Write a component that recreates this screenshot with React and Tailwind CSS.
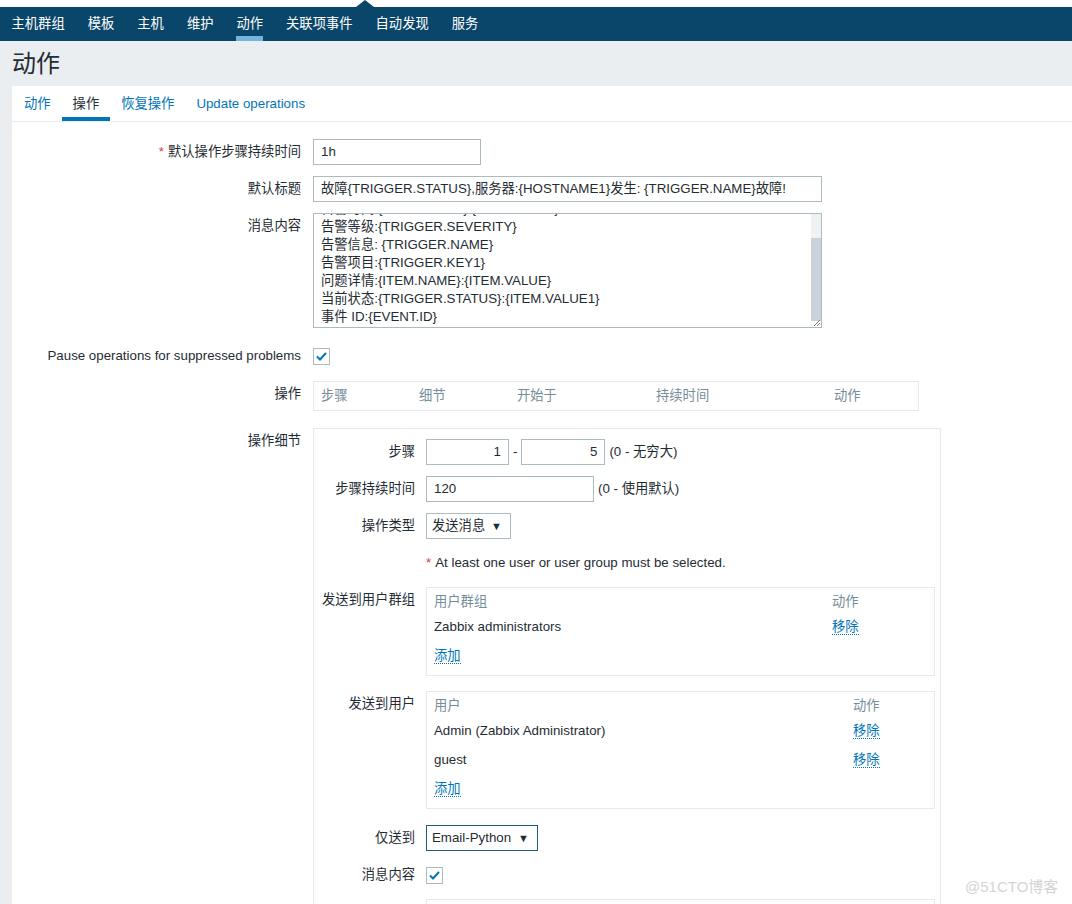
import React from 'react';

const navItems = ['主机群组', '模板', '主机', '维护', '动作', '关联项事件', '自动发现', '服务'];
const tabs = ['动作', '操作', '恢复操作', 'Update operations'];

const messageLines = [
  '告警时间:{EVENT.DATE} {EVENT.TIME}',
  '告警等级:{TRIGGER.SEVERITY}',
  '告警信息: {TRIGGER.NAME}',
  '告警项目:{TRIGGER.KEY1}',
  '问题详情:{ITEM.NAME}:{ITEM.VALUE}',
  '当前状态:{TRIGGER.STATUS}:{ITEM.VALUE1}',
  '事件 ID:{EVENT.ID}',
];

function Check() {
  return (
    <div className="w-[17px] h-[17px] border border-[#acbbc2] bg-white flex items-center justify-center">
      <svg width="11" height="9" viewBox="0 0 11 9">
        <path d="M1 4.5 L4 7.5 L10 1" fill="none" stroke="#0275b8" strokeWidth="2" />
      </svg>
    </div>
  );
}

function Input({ value, className = '' }) {
  return (
    <div className={`h-[26px] border border-[#acbbc2] bg-white px-[7px] flex items-center whitespace-nowrap ${className}`}>
      {value}
    </div>
  );
}

function Select({ value, className = '' }) {
  return (
    <div className={`h-[26px] border bg-white pl-[5px] pr-[8px] flex items-center justify-between ${className}`}>
      <span>{value}</span>
      <span className="text-[11px]">▼</span>
    </div>
  );
}

function Link({ children }) {
  return <span className="text-[#0275b8] border-b border-dotted border-[#0275b8] leading-[15px]">{children}</span>;
}

function Row({ label, required, children, className = '' }) {
  return (
    <div className={`flex gap-[12px] ${className}`}>
      <div className="w-[289px] text-right leading-[26px] shrink-0">
        {required && <span className="text-[#e33734] mr-[4px]">*</span>}
        {label}
      </div>
      <div className="flex-1 min-w-0">{children}</div>
    </div>
  );
}

function SubRow({ label, children, className = '' }) {
  return (
    <div className={`flex gap-[11px] ${className}`}>
      <div className="w-[101px] text-right leading-[26px] shrink-0 whitespace-nowrap">{label}</div>
      <div className="flex-1 min-w-0">{children}</div>
    </div>
  );
}

export default function App() {
  return (
    <div className="relative h-[904px] overflow-hidden bg-[#ebeef0] font-['Liberation_Sans','Noto_Sans_CJK_SC',sans-serif] text-[13.3px] text-[#1f2c33]">
      {/* top strip + notch */}
      <div className="relative h-[7px] bg-white">
        <svg className="absolute left-[356px] top-0" width="18" height="7" viewBox="0 0 18 7">
          <path d="M0 7 L9 0 L18 7 Z" fill="#0a466a" />
        </svg>
      </div>

      <nav className="h-[34px] bg-[#0a466a] flex">
        {navItems.map((item) => (
          <div key={item} className="relative px-[11.5px] flex items-center text-white">
            {item}
            {item === '动作' && <div className="absolute left-[11.5px] right-[11.5px] bottom-0 h-[5px] bg-[#74b4e2]" />}
          </div>
        ))}
      </nav>

      <div className="h-[45px] flex items-center pl-[12px] text-[24px] text-[#1f2c33]">动作</div>

      <div className="ml-[12px] bg-white h-full">
        <div className="flex pl-[1px] border-b border-[#ebeef0]">
          {tabs.map((t) => (
            <div
              key={t}
              className={`relative h-[35px] px-[11px] flex items-center ${t === '操作' ? 'text-[#1f2c33]' : 'text-[#0275b8]'}`}
            >
              {t}
              {t === '操作' && <div className="absolute left-0 right-0 bottom-0 h-[4px] bg-[#0275b8]" />}
            </div>
          ))}
        </div>

        <div className="pt-[17px]">
          <Row label="默认操作步骤持续时间" required>
            <Input value="1h" className="w-[168px]" />
          </Row>

          <Row label="默认标题" className="mt-[11px]">
            <Input value="故障{TRIGGER.STATUS},服务器:{HOSTNAME1}发生: {TRIGGER.NAME}故障!" className="w-[509px]" />
          </Row>

          <Row label="消息内容" className="mt-[11px]">
            <div className="relative w-[509px] h-[115px] border border-[#acbbc2] overflow-hidden">
              <div className="mt-[-14px] px-[7px] leading-[18px]">
                {messageLines.map((l) => (
                  <div key={l} className="whitespace-nowrap">{l}</div>
                ))}
              </div>
              <div className="absolute right-0 top-0 bottom-0 w-[10px] bg-[#f0f1f2]">
                <div className="absolute left-0 right-0 top-[24px] h-[84px] bg-[#c9d3d9]" />
                <div className="absolute left-0 right-0 bottom-0 h-[6px] bg-white" />
              </div>
              <svg className="absolute right-[1px] bottom-[1px]" width="6" height="6" viewBox="0 0 6 6">
                <path d="M6 0 L0 6 M6 3 L3 6" stroke="#777" strokeWidth="1" />
              </svg>
            </div>
          </Row>

          <Row label="Pause operations for suppressed problems" className="mt-[15px]">
            <div className="h-[26px] flex items-center">
              <Check />
            </div>
          </Row>

          <Row label="操作" className="mt-[12px]">
            <div className="w-[606px] h-[30px] border border-[#e6eaec] grid grid-cols-[98px_98px_139px_178px_1fr] items-center pl-[7px] text-[#768d99]">
              <span>步骤</span>
              <span>细节</span>
              <span>开始于</span>
              <span>持续时间</span>
              <span>动作</span>
            </div>
          </Row>

          <Row label="操作细节" className="mt-[17px]">
            <div className="w-[628px] h-[500px] border border-b-0 border-[#e6eaec] pt-[10px] pr-[5px]">
              <SubRow label="步骤">
                <div className="flex items-center">
                  <Input value="1" className="w-[83px] justify-end" />
                  <span className="mx-[4px]">-</span>
                  <Input value="5" className="w-[84px] justify-end" />
                  <span className="ml-[4px]">(0 - 无穷大)</span>
                </div>
              </SubRow>

              <SubRow label="步骤持续时间" className="mt-[11px]">
                <div className="flex items-center">
                  <Input value="120" className="w-[168px]" />
                  <span className="ml-[4px]">(0 - 使用默认)</span>
                </div>
              </SubRow>

              <SubRow label="操作类型" className="mt-[11px]">
                <Select value="发送消息" className="w-[85px] border-[#acbbc2]" />
              </SubRow>

              <SubRow label="" className="mt-[11px]">
                <div className="leading-[26px]">
                  <span className="text-[#e33734] mr-[4px]">*</span>
                  At least one user or user group must be selected.
                </div>
              </SubRow>

              <SubRow label="发送到用户群组" className="mt-[11px]">
                <div className="border border-[#e6eaec] pt-[4px] pb-[5px] pl-[7px]">
                  <div className="grid grid-cols-[398px_1fr] h-[20px] items-center text-[#768d99]">
                    <span>用户群组</span>
                    <span>动作</span>
                  </div>
                  <div className="grid grid-cols-[398px_1fr] h-[29px] items-center">
                    <span>Zabbix administrators</span>
                    <span><Link>移除</Link></span>
                  </div>
                  <div className="h-[29px] flex items-center">
                    <Link>添加</Link>
                  </div>
                </div>
              </SubRow>

              <SubRow label="发送到用户" className="mt-[15px]">
                <div className="border border-[#e6eaec] pt-[4px] pb-[5px] pl-[7px]">
                  <div className="grid grid-cols-[419px_1fr] h-[20px] items-center text-[#768d99]">
                    <span>用户</span>
                    <span>动作</span>
                  </div>
                  <div className="grid grid-cols-[419px_1fr] h-[29px] items-center">
                    <span>Admin (Zabbix Administrator)</span>
                    <span><Link>移除</Link></span>
                  </div>
                  <div className="grid grid-cols-[419px_1fr] h-[29px] items-center">
                    <span>guest</span>
                    <span><Link>移除</Link></span>
                  </div>
                  <div className="h-[29px] flex items-center">
                    <Link>添加</Link>
                  </div>
                </div>
              </SubRow>

              <SubRow label="仅送到" className="mt-[16px]">
                <Select value="Email-Python" className="w-[112px] border-[#1d5b7f]" />
              </SubRow>

              <SubRow label="消息内容" className="mt-[11px]">
                <div className="h-[26px] flex items-center">
                  <Check />
                </div>
              </SubRow>

              <SubRow label="" className="mt-[11px]">
                <div className="h-[60px] border border-[#e6eaec]" />
              </SubRow>
            </div>
          </Row>
        </div>
      </div>

      <div className="absolute left-[965px] top-[876px] text-[15px] text-[#d4d4d4]">@51CTO博客</div>
    </div>
  );
}
